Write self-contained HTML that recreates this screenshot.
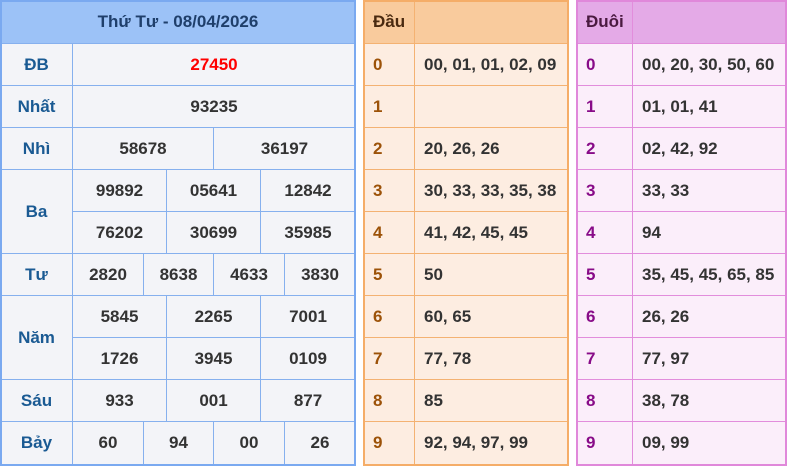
<!DOCTYPE html><html><head><meta charset="utf-8"><style>
body{margin:0;width:787px;height:467px;background:#fff;position:relative;overflow:hidden;font-family:"Liberation Sans",Arial,sans-serif;font-weight:bold;font-size:17px;color:#333}
.c{position:absolute;box-sizing:border-box;display:flex;align-items:center;justify-content:center;border:1px solid #86b0ee;background:#f3f4f8}
.h{display:block;line-height:41px;text-align:center}
.l{color:#1a5a93}
.o{border-color:#f4b272;background:#fdede1;justify-content:flex-start;padding-left:9px}
.p{border-color:#e28ddc;background:#fbeefa;justify-content:flex-start;padding-left:9px}
.hl{display:block;line-height:41px;text-align:left}
.od{color:#9c5208}.pd{color:#880b88}
.frame{position:absolute;box-sizing:border-box;border:2px solid;pointer-events:none}
</style></head><body>
<div class="c h" style="left:0;top:0;width:356px;height:44px;background:#9cc2f7;color:#1f3f6b">Thứ Tư - 08/04/2026</div>
<div class="c l" style="left:0;top:43px;width:73px;height:43px">ĐB</div>
<div class="c" style="left:72px;top:43px;width:284px;height:43px;color:#f00">27450</div>
<div class="c l" style="left:0;top:85px;width:73px;height:43px">Nhất</div>
<div class="c" style="left:72px;top:85px;width:284px;height:43px">93235</div>
<div class="c l" style="left:0;top:127px;width:73px;height:43px">Nhì</div>
<div class="c" style="left:72px;top:127px;width:142px;height:43px">58678</div>
<div class="c" style="left:213px;top:127px;width:143px;height:43px">36197</div>
<div class="c l" style="left:0;top:169px;width:73px;height:85px">Ba</div>
<div class="c" style="left:72px;top:169px;width:95px;height:43px">99892</div>
<div class="c" style="left:166px;top:169px;width:95px;height:43px">05641</div>
<div class="c" style="left:260px;top:169px;width:96px;height:43px">12842</div>
<div class="c" style="left:72px;top:211px;width:95px;height:43px">76202</div>
<div class="c" style="left:166px;top:211px;width:95px;height:43px">30699</div>
<div class="c" style="left:260px;top:211px;width:96px;height:43px">35985</div>
<div class="c l" style="left:0;top:253px;width:73px;height:43px">Tư</div>
<div class="c" style="left:72px;top:253px;width:72px;height:43px">2820</div>
<div class="c" style="left:143px;top:253px;width:71px;height:43px">8638</div>
<div class="c" style="left:213px;top:253px;width:72px;height:43px">4633</div>
<div class="c" style="left:284px;top:253px;width:72px;height:43px">3830</div>
<div class="c l" style="left:0;top:295px;width:73px;height:85px">Năm</div>
<div class="c" style="left:72px;top:295px;width:95px;height:43px">5845</div>
<div class="c" style="left:166px;top:295px;width:95px;height:43px">2265</div>
<div class="c" style="left:260px;top:295px;width:96px;height:43px">7001</div>
<div class="c" style="left:72px;top:337px;width:95px;height:43px">1726</div>
<div class="c" style="left:166px;top:337px;width:95px;height:43px">3945</div>
<div class="c" style="left:260px;top:337px;width:96px;height:43px">0109</div>
<div class="c l" style="left:0;top:379px;width:73px;height:43px">Sáu</div>
<div class="c" style="left:72px;top:379px;width:95px;height:43px">933</div>
<div class="c" style="left:166px;top:379px;width:95px;height:43px">001</div>
<div class="c" style="left:260px;top:379px;width:96px;height:43px">877</div>
<div class="c l" style="left:0;top:421px;width:73px;height:44px">Bảy</div>
<div class="c" style="left:72px;top:421px;width:72px;height:44px">60</div>
<div class="c" style="left:143px;top:421px;width:71px;height:44px">94</div>
<div class="c" style="left:213px;top:421px;width:72px;height:44px">00</div>
<div class="c" style="left:284px;top:421px;width:72px;height:44px">26</div>
<div class="frame" style="left:0;top:0;width:356px;height:466px;border-color:#7aa9f0"></div>

<div class="c o hl" style="left:363px;top:0;width:52px;height:44px;background:#f9cb9d;color:#4a2a10">Đầu</div>
<div class="c o" style="left:414px;top:0;width:155px;height:44px;background:#f9cb9d"></div>
<div class="c o od" style="left:363px;top:43px;width:52px;height:43px">0</div><div class="c o" style="left:414px;top:43px;width:155px;height:43px">00, 01, 01, 02, 09</div>
<div class="c o od" style="left:363px;top:85px;width:52px;height:43px">1</div><div class="c o" style="left:414px;top:85px;width:155px;height:43px"></div>
<div class="c o od" style="left:363px;top:127px;width:52px;height:43px">2</div><div class="c o" style="left:414px;top:127px;width:155px;height:43px">20, 26, 26</div>
<div class="c o od" style="left:363px;top:169px;width:52px;height:43px">3</div><div class="c o" style="left:414px;top:169px;width:155px;height:43px">30, 33, 33, 35, 38</div>
<div class="c o od" style="left:363px;top:211px;width:52px;height:43px">4</div><div class="c o" style="left:414px;top:211px;width:155px;height:43px">41, 42, 45, 45</div>
<div class="c o od" style="left:363px;top:253px;width:52px;height:43px">5</div><div class="c o" style="left:414px;top:253px;width:155px;height:43px">50</div>
<div class="c o od" style="left:363px;top:295px;width:52px;height:43px">6</div><div class="c o" style="left:414px;top:295px;width:155px;height:43px">60, 65</div>
<div class="c o od" style="left:363px;top:337px;width:52px;height:43px">7</div><div class="c o" style="left:414px;top:337px;width:155px;height:43px">77, 78</div>
<div class="c o od" style="left:363px;top:379px;width:52px;height:43px">8</div><div class="c o" style="left:414px;top:379px;width:155px;height:43px">85</div>
<div class="c o od" style="left:363px;top:421px;width:52px;height:44px">9</div><div class="c o" style="left:414px;top:421px;width:155px;height:44px">92, 94, 97, 99</div>
<div class="frame" style="left:363px;top:0;width:206px;height:466px;border-color:#f5ad68"></div>

<div class="c p hl" style="left:576px;top:0;width:57px;height:44px;background:#e4aae7;color:#4a1a40">Đuôi</div>
<div class="c p" style="left:632px;top:0;width:155px;height:44px;background:#e4aae7"></div>
<div class="c p pd" style="left:576px;top:43px;width:57px;height:43px">0</div><div class="c p" style="left:632px;top:43px;width:155px;height:43px">00, 20, 30, 50, 60</div>
<div class="c p pd" style="left:576px;top:85px;width:57px;height:43px">1</div><div class="c p" style="left:632px;top:85px;width:155px;height:43px">01, 01, 41</div>
<div class="c p pd" style="left:576px;top:127px;width:57px;height:43px">2</div><div class="c p" style="left:632px;top:127px;width:155px;height:43px">02, 42, 92</div>
<div class="c p pd" style="left:576px;top:169px;width:57px;height:43px">3</div><div class="c p" style="left:632px;top:169px;width:155px;height:43px">33, 33</div>
<div class="c p pd" style="left:576px;top:211px;width:57px;height:43px">4</div><div class="c p" style="left:632px;top:211px;width:155px;height:43px">94</div>
<div class="c p pd" style="left:576px;top:253px;width:57px;height:43px">5</div><div class="c p" style="left:632px;top:253px;width:155px;height:43px">35, 45, 45, 65, 85</div>
<div class="c p pd" style="left:576px;top:295px;width:57px;height:43px">6</div><div class="c p" style="left:632px;top:295px;width:155px;height:43px">26, 26</div>
<div class="c p pd" style="left:576px;top:337px;width:57px;height:43px">7</div><div class="c p" style="left:632px;top:337px;width:155px;height:43px">77, 97</div>
<div class="c p pd" style="left:576px;top:379px;width:57px;height:43px">8</div><div class="c p" style="left:632px;top:379px;width:155px;height:43px">38, 78</div>
<div class="c p pd" style="left:576px;top:421px;width:57px;height:44px">9</div><div class="c p" style="left:632px;top:421px;width:155px;height:44px">09, 99</div>
<div class="frame" style="left:576px;top:0;width:211px;height:466px;border-color:#e088da"></div>
</body></html>
